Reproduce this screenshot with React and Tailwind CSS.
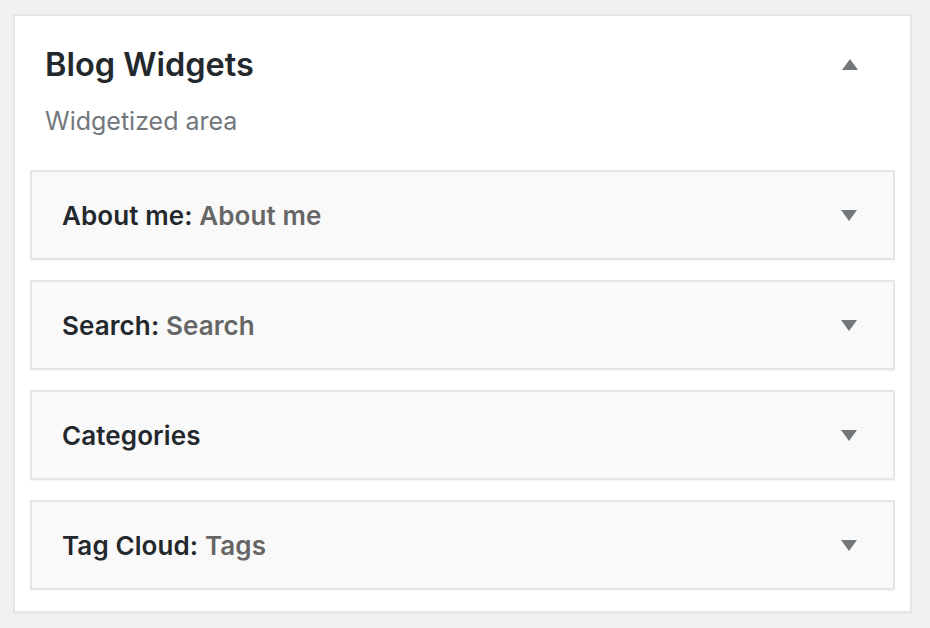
import { useState } from "react";

const WIDGETS = [
  { name: "About me", title: "About me" },
  { name: "Search", title: "Search" },
  { name: "Categories", title: "" },
  { name: "Tag Cloud", title: "Tags" },
];

function Arrow({ up }) {
  return (
    <svg width="16" height="11" viewBox="0 0 16 11" className="shrink-0">
      {up ? (
        <path d="M8 0 L16 11 L0 11 Z" fill="#72777c" />
      ) : (
        <path d="M0 0 L16 0 L8 11 Z" fill="#72777c" />
      )}
    </svg>
  );
}

function WidgetRow({ widget }) {
  return (
    <div className="flex h-[90px] items-center justify-between border-2 border-[#e5e5e5] bg-[#f9f9f9] pl-[30px] pr-[36px] shadow-[0_1px_1px_rgba(0,0,0,0.04)]">
      <div className="text-[26px] font-semibold tracking-[0.1px] text-[#23282d]">
        {widget.name}
        {widget.title ? (
          <>
            :{" "}
            <span className="text-[#666666]">{widget.title}</span>
          </>
        ) : null}
      </div>
      <Arrow />
    </div>
  );
}

export default function App() {
  const [open] = useState(true);

  return (
    <div
      className="min-h-screen bg-[#f1f1f1] pl-[13px] pt-[14px]"
      style={{ fontFamily: "Inter, 'Noto Sans', sans-serif" }}
    >
      <div className="w-[899px] border-2 border-[#e5e5e5] bg-white px-[15px] pb-[21px] shadow-[0_1px_1px_rgba(0,0,0,0.04)]">
        <div className="flex items-start justify-between pl-[15px] pr-[37px] pt-[27px]">
          <h2 className="text-[32.5px] font-semibold leading-[44px] text-[#23282d]">
            Blog Widgets
          </h2>
          <div className="pt-[16px]">
            <Arrow up={open} />
          </div>
        </div>
        <p className="mt-[19px] pl-[15px] text-[25px] leading-[30px] text-[#72777c]">
          Widgetized area
        </p>
        <div className="mt-[34px] flex flex-col gap-[20px]">
          {WIDGETS.map((w) => (
            <WidgetRow key={w.name} widget={w} />
          ))}
        </div>
      </div>
    </div>
  );
}
